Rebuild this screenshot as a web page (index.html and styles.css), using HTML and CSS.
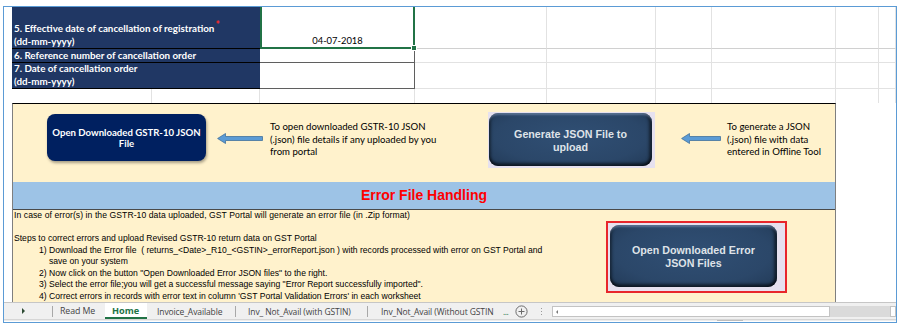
FILE: index.html
```html
<!DOCTYPE html>
<html>
<head>
<meta charset="utf-8">
<link rel="stylesheet" href="styles.css">
</head>
<body>
<div class="frame">
  <div class="sheet">
    <div class="grid">
      <div class="gut"></div>
      <div class="lbl r1"><span>5. Effective date of cancellation of registration<span class="req">*</span></span><span>(dd-mm-yyyy)</span></div>
      <div class="val sel">04-07-2018<span class="handle"></span></div>
      <div class="g r1b"></div><div class="g r1b"></div><div class="g r1b"></div><div class="g r1b"></div><div class="g r1b"></div><div class="g r1b"></div>

      <div class="gut"></div>
      <div class="lbl"><span>6. Reference number of cancellation order</span></div>
      <div class="val"></div>
      <div class="g"></div><div class="g"></div><div class="g"></div><div class="g"></div><div class="g"></div><div class="g"></div>

      <div class="gut"></div>
      <div class="lbl"><span>7. Date of cancellation order</span><span>(dd-mm-yyyy)</span></div>
      <div class="val"></div>
      <div class="g"></div><div class="g"></div><div class="g"></div><div class="g"></div><div class="g"></div><div class="g"></div>

      <div class="gut"></div>
      <div class="g nb"></div><div class="g nb"></div><div class="g nb"></div><div class="g nb"></div><div class="g nb"></div><div class="g nb"></div><div class="g nb"></div><div class="g nb"></div><div class="g nb"></div>
    </div>

    <div class="panel">
      <div class="top-sec">
        <div class="btn-navy">Open Downloaded GSTR-10 JSON<br>File</div>
        <svg class="arrow a1" width="46" height="11" viewBox="0 0 46 11"><path d="M0.6 5.5 L8.5 0.5 V3.5 H45.5 V7.5 H8.5 V10.5 Z" fill="#5b9bd5" stroke="#41719c" stroke-width="0.8"/></svg>
        <div class="note n1">To open downloaded GSTR-10 JSON<br>(.json) file details if any uploaded by you<br>from portal</div>
        <div class="gen-wrap"><div class="bevel gen">Generate JSON File to<br>upload</div></div>
        <svg class="arrow a2" width="40" height="11" viewBox="0 0 40 11"><path d="M0.6 5.5 L8.5 0.5 V3.5 H39.5 V7.5 H8.5 V10.5 Z" fill="#5b9bd5" stroke="#41719c" stroke-width="0.8"/></svg>
        <div class="note n2">To generate a JSON<br>(.json) file with data<br>entered in Offline Tool</div>
      </div>
      <div class="err-head">Error File Handling</div>
      <div class="err-body">
        <div class="err-text">
          <div class="line wide">In case of error(s) in the GSTR-10 data uploaded, GST Portal will generate an error file (in .Zip format)</div>
          <div class="line">&nbsp;</div>
          <div class="line">Steps to correct errors and upload Revised GSTR-10 return data on GST Portal</div>
          <div class="step">1) Download the Error file&nbsp; ( returns_&lt;Date&gt;_R10_&lt;GSTIN&gt;_errorReport.json ) with records processed with error on GST Portal and<br>save on your system</div>
          <div class="step">2) Now click on the button "Open Downloaded Error JSON files" to the right.</div>
          <div class="step">3) Select the error file;you will get a successful message saying "Error Report successfully imported".</div>
          <div class="step">4) Correct errors in records with error text in column 'GST Portal Validation Errors' in each worksheet</div>
        </div>
        <div class="err-side">
          <div class="red-box"><div class="bevel errbtn">Open Downloaded Error<br>JSON Files</div></div>
        </div>
      </div>
    </div>
  </div>

  <div class="tabbar">
    <div class="nav"><span class="tri"></span></div>
    <div class="sep"></div>
    <div class="tab t-read">Read Me</div>
    <div class="tab t-home">Home</div>
    <div class="tab t-inv">Invoice_Available</div>
    <div class="sep"></div>
    <div class="tab t-with">Inv_ Not_Avail (with GSTIN)</div>
    <div class="sep"></div>
    <div class="tab t-without">Inv_Not_Avail (Without GSTIN</div>
    <div class="more">...</div>
    <svg class="plus" width="13" height="13" viewBox="0 0 13 13"><circle cx="6.5" cy="6.5" r="5.6" fill="none" stroke="#6b6b6b" stroke-width="1"/><path d="M6.5 3.5 V9.5 M3.5 6.5 H9.5" stroke="#6b6b6b" stroke-width="1"/></svg>
    <div class="vdots"><i></i><i></i><i></i></div>
    <div class="hscroll"><span class="larr"></span></div>
    <div class="track"></div>
    <div class="rbox"></div>
  </div>
  <div class="strip"><div class="strip-thumb"></div></div>
</div>
</body>
</html>
```

FILE: styles.css
```css
* { box-sizing: border-box; }

body {
  margin: 0;
  background: #ffffff;
  font-family: "Liberation Sans", Arial, sans-serif;
}

.frame {
  margin: 6px 0 0 3px;
  width: 894px;
  height: 317px;
  border: 1px solid #5b9bd5;
  display: flex;
  flex-direction: column;
  overflow: hidden;
  background: #ffffff;
}

.sheet {
  flex: none;
  height: 295px;
  overflow: hidden;
}

/* ---------- spreadsheet grid ---------- */
.grid {
  display: grid;
  grid-template-columns: 8px 140px 108px 155px 132px 109px 56px 124px 43px 1fr;
  grid-template-rows: 42px 14px 26px 14px;
}

.g {
  border-right: 1px solid #e2e2e2;
  border-bottom: 1px solid #e2e2e2;
}
.g.r1b { border-bottom-color: #d0d0d0; }
.g.nb { border-bottom: 0; }

.lbl {
  grid-column: span 2;
  background: #203764;
  color: #ffffff;
  font-family: Lato, "Liberation Sans", sans-serif;
  font-weight: bold;
  font-size: 9.8px;
  line-height: 13px;
  padding-left: 2px;
  border-bottom: 1px solid #000000;
  display: flex;
  flex-direction: column;
  justify-content: flex-end;
  white-space: nowrap;
}
.req {
  color: #ff2a2a;
  font-size: 10.5px;
  position: relative;
  top: -3px;
  margin-left: 1px;
}

.val {
  border-right: 1px solid #5f5f5f;
  border-bottom: 1px solid #5f5f5f;
}
.val.sel {
  position: relative;
  border: 2px solid #217346;
  border-top: 0;
  display: flex;
  align-items: flex-end;
  justify-content: center;
  font-family: Lato, "Liberation Sans", sans-serif;
  font-size: 9.4px;
  line-height: 13px;
  color: #000000;
}
.handle {
  position: absolute;
  right: -4px;
  bottom: -4px;
  width: 6px;
  height: 6px;
  background: #217346;
  border: 1px solid #ffffff;
}

/* ---------- yellow panel ---------- */
.panel {
  margin-left: 8px;
  width: 824px;
  height: 200px;
  background: #fff2cc;
  border-top: 1px solid #000000;
  border-left: 1px solid #7f7f7f;
  border-right: 1px solid #7f7f7f;
}

.top-sec {
  height: 78px;
  display: flex;
  align-items: flex-start;
  padding: 8px 0 0 34px;
}

.btn-navy {
  flex: none;
  margin-top: 2px;
  width: 159px;
  height: 47px;
  background: #002060;
  border-radius: 8px;
  box-shadow: 1px 2px 3px rgba(0, 0, 0, 0.35);
  color: #ffffff;
  font-family: Lato, "Liberation Sans", sans-serif;
  font-weight: bold;
  font-size: 9.6px;
  line-height: 11px;
  display: flex;
  align-items: center;
  justify-content: center;
  text-align: center;
  padding-top: 1px;
}

.arrow { flex: none; display: block; }
.a1 { margin: 21px 0 0 11px; }
.a2 { margin: 21px 0 0 26px; }

.note {
  flex: none;
  margin-top: 9px;
  font-family: Lato, "Liberation Sans", sans-serif;
  font-size: 9.6px;
  line-height: 12.5px;
  color: #000000;
  white-space: nowrap;
}
.n1 { margin-left: 7px; width: 218px; }
.n2 { margin-left: 6px; }

.gen-wrap {
  flex: none;
  width: 167px;
  height: 56px;
  background: #e6e1ef;
  padding: 1px 0 0 1px;
}

.bevel {
  background: radial-gradient(ellipse at 50% 45%, #304f74 0%, #2b4769 65%, #223a57 100%);
  border-radius: 9px;
  box-shadow:
    inset 0 3px 2px -1px rgba(150, 175, 210, 0.45),
    inset 0 -4px 3px -1px rgba(0, 0, 0, 0.55),
    inset 3px 0 3px -1px rgba(0, 0, 0, 0.4),
    inset -4px 0 3px -1px rgba(0, 0, 0, 0.5);
  color: #dfe3e8;
  font-family: "Liberation Sans", Arial, sans-serif;
  font-weight: bold;
  font-size: 10.7px;
  line-height: 13px;
  display: flex;
  align-items: center;
  justify-content: center;
  text-align: center;
}
.gen { width: 163px; height: 53px; padding-top: 2px; }

.err-head {
  height: 28px;
  background: #9dc3e6;
  border-bottom: 1px solid #4a4a4a;
  color: #ff0000;
  font-family: "Liberation Sans", Arial, sans-serif;
  font-weight: bold;
  font-size: 14px;
  display: flex;
  align-items: center;
  justify-content: center;
  padding-bottom: 1px;
}

.err-body {
  display: flex;
  align-items: flex-start;
}

.err-text {
  flex: none;
  width: 593px;
  padding-left: 1px;
  font-family: "Liberation Sans", Arial, sans-serif;
  font-size: 8.6px;
  line-height: 11.5px;
  color: #000000;
  white-space: nowrap;
}
.line.wide { letter-spacing: 0.07px; }
.step {
  padding-left: 35px;
  text-indent: -10px;
}

.err-side { margin-top: 11px; }
.red-box {
  width: 181px;
  height: 72px;
  border: 2px solid #e8262b;
  background: #e6e1ef;
  padding: 2px 0 0 2px;
}
.errbtn { width: 167px; height: 62px; padding-top: 2px; }

/* ---------- sheet tabs ---------- */
.tabbar {
  flex: none;
  height: 18px;
  background: #f0f0f0;
  border-top: 1px solid #c6c6c6;
  border-bottom: 1px solid #d6d6d6;
  display: flex;
  align-items: stretch;
  font-family: "Open Sans", "Noto Sans", sans-serif;
  font-size: 8.5px;
  letter-spacing: -0.1px;
  color: #444444;
}
.nav {
  flex: none;
  width: 48px;
  display: flex;
  align-items: center;
  padding-left: 18px;
}
.tri {
  width: 0;
  height: 0;
  border-top: 3px solid transparent;
  border-bottom: 3px solid transparent;
  border-left: 3px solid #2d4a33;
}
.sep {
  flex: none;
  width: 1px;
  background: #a8a8a8;
  margin: 3px 0 2px;
}
.tab {
  flex: none;
  display: flex;
  align-items: center;
  white-space: nowrap;
}
.t-read { width: 52px; padding-left: 7px; font-size: 8.8px; }
.t-home {
  width: 42px;
  padding-left: 7px;
  background: #ffffff;
  color: #217346;
  font-weight: bold;
  font-size: 9.2px;
  letter-spacing: 0;
  border-bottom: 2px solid #217346;
}
.t-inv { width: 88px; padding-left: 10px; }
.t-with { width: 131px; padding-left: 12px; }
.t-without { width: 129px; padding-left: 13px; }
.more {
  flex: none;
  margin-left: 6px;
  width: 12px;
  color: #217346;
  display: flex;
  align-items: center;
  letter-spacing: -0.5px;
}
.plus { flex: none; margin: 2px 0 0 0; }
.vdots {
  flex: none;
  margin-left: 13px;
  width: 11px;
  display: flex;
  flex-direction: column;
  justify-content: center;
  gap: 2px;
}
.vdots i {
  display: block;
  width: 1px;
  height: 1px;
  background: #9a9a9a;
}
.hscroll {
  flex: none;
  margin: 3px 0 2px 0;
  width: 278px;
  background: #ffffff;
  border: 1px solid #c3c3c3;
  display: flex;
  align-items: center;
  padding-left: 3px;
}
.larr {
  width: 0;
  height: 0;
  border-top: 2px solid transparent;
  border-bottom: 2px solid transparent;
  border-right: 2px solid #7a7a7a;
}
.track {
  flex: none;
  width: 60px;
  margin: 3px 0 2px;
  background: #dadada;
}
.rbox {
  flex: 1;
  margin: 3px 0 2px;
  background: #ffffff;
  border: 1px solid #c3c3c3;
}

.strip {
  flex: none;
  height: 1px;
  background: #ececec;
  padding-left: 713px;
}
.strip-thumb {
  width: 26px;
  height: 1px;
  background: #bdbdbd;
}
```
